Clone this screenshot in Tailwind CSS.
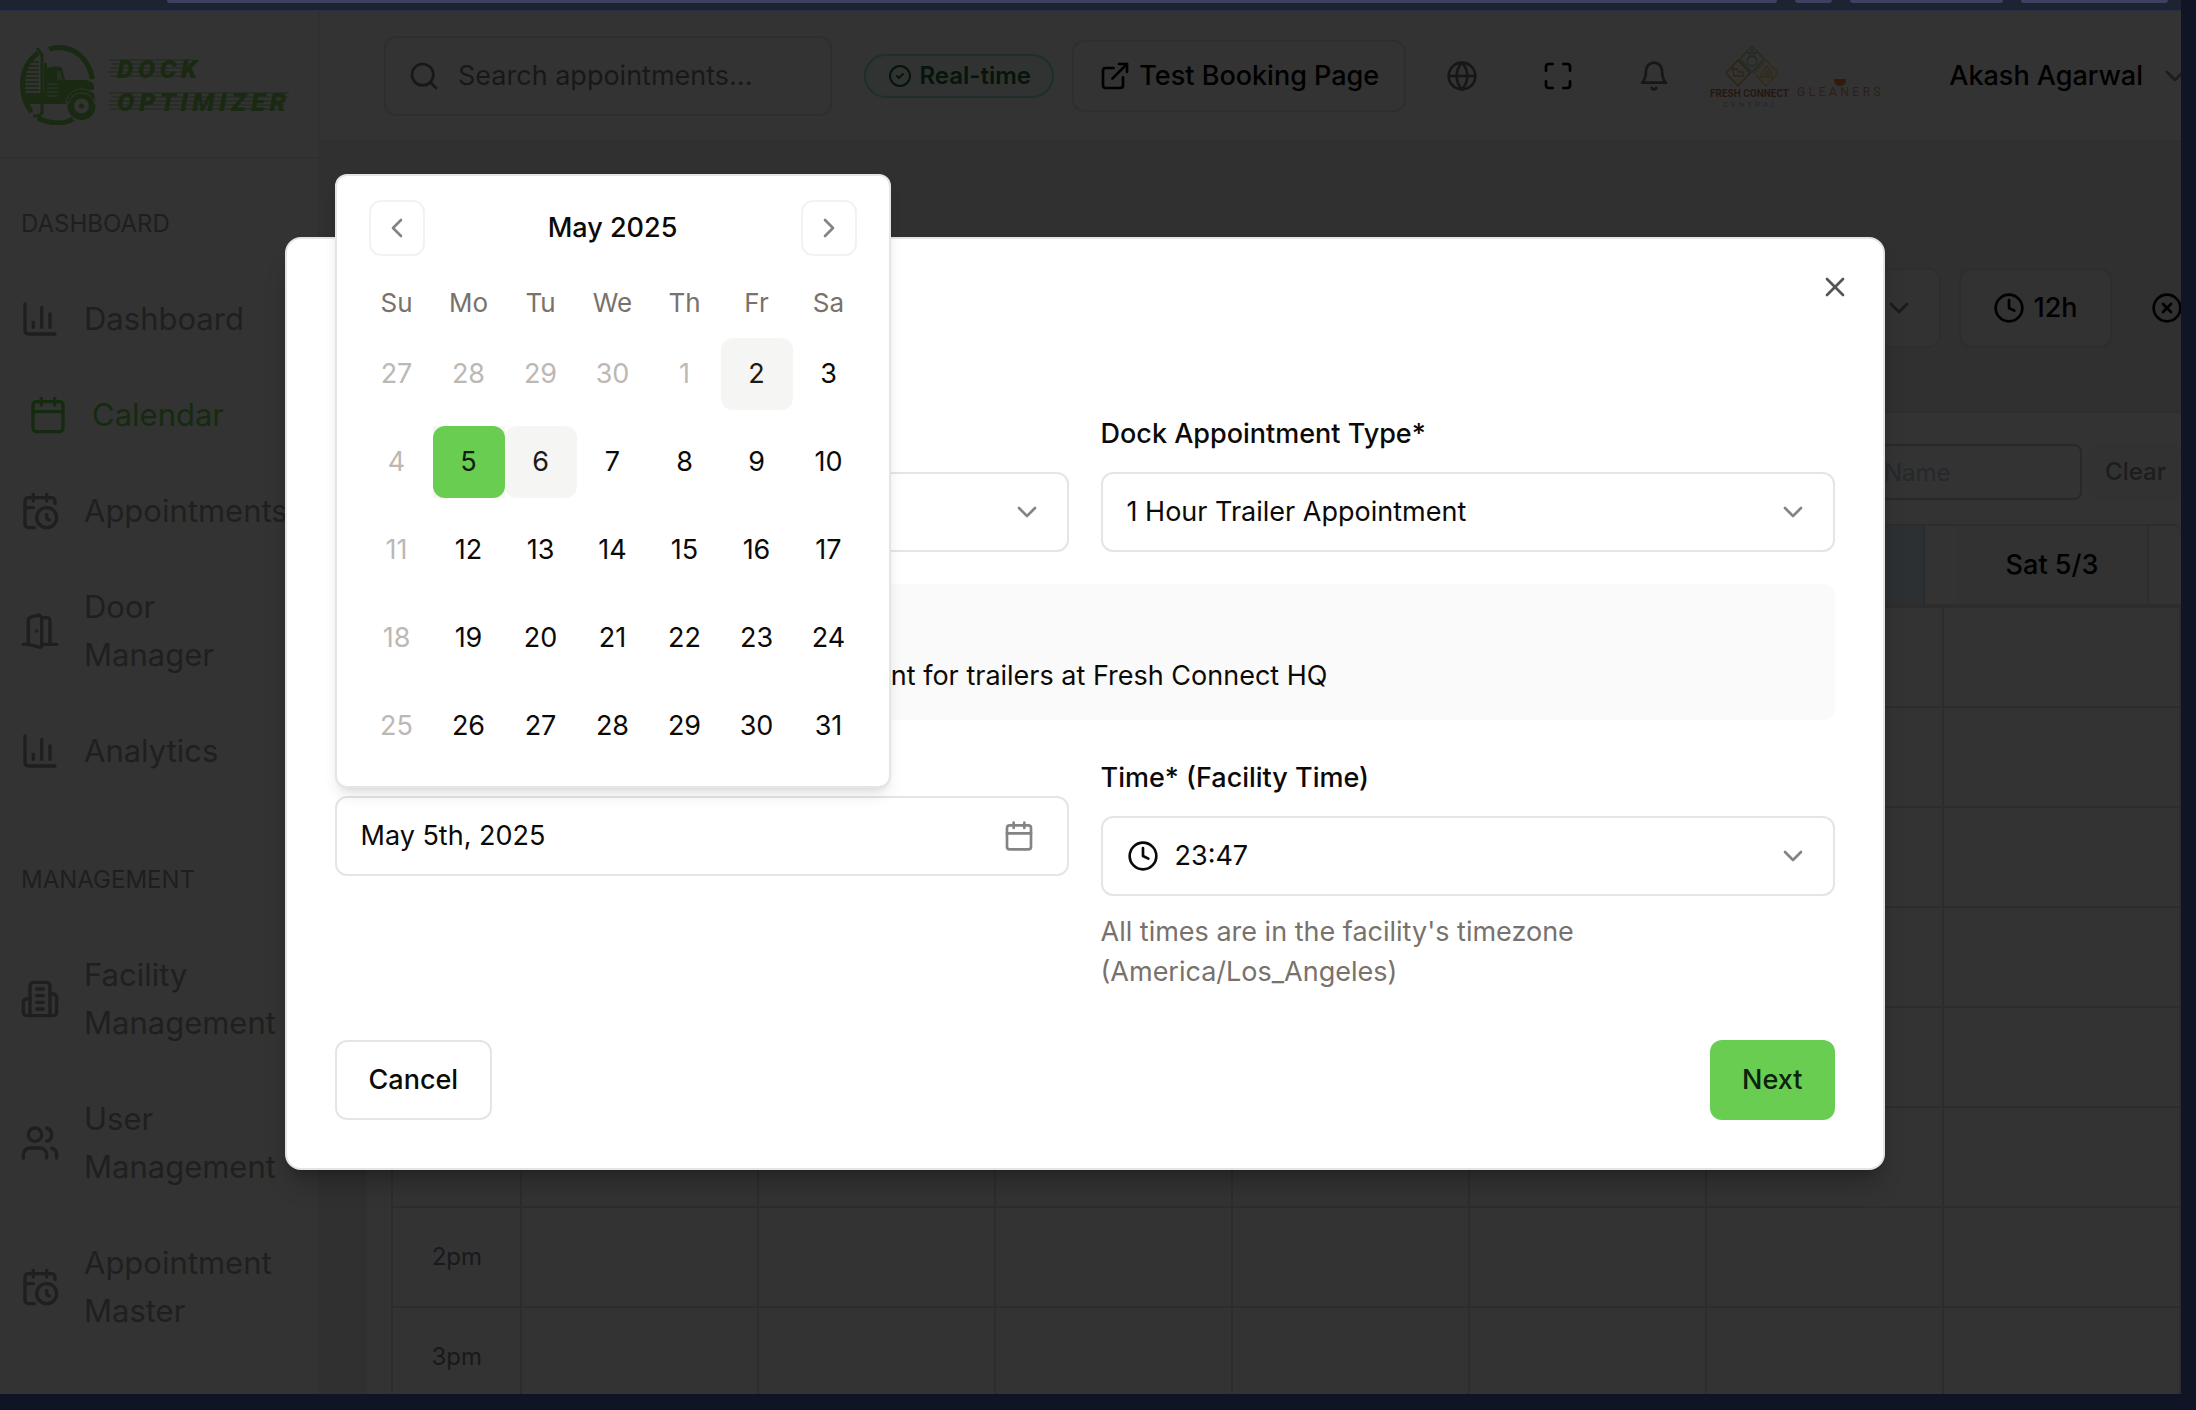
<!DOCTYPE html>
<html lang="en">
<head>
<meta charset="utf-8">
<title>Dock Optimizer</title>
<script src="https://cdn.jsdelivr.net/npm/@tailwindcss/browser@4"></script>
</head>
<body class="h-screen overflow-hidden flex flex-col bg-[#0f1524] font-['Inter',sans-serif] text-[27px] leading-10 text-black">

<svg class="hidden" aria-hidden="true">
  <defs>
    <symbol id="chart" viewBox="0 0 24 24"><path d="M3 3v16a2 2 0 0 0 2 2h16"/><path d="M18 17V9"/><path d="M13 17V5"/><path d="M8 17v-3"/></symbol>
    <symbol id="calendar" viewBox="0 0 24 24"><path d="M8 2v4"/><path d="M16 2v4"/><rect width="18" height="18" x="3" y="4" rx="2"/><path d="M3 10h18"/></symbol>
    <symbol id="calclock" viewBox="0 0 24 24"><path d="M21 7.5V6a2 2 0 0 0-2-2H5a2 2 0 0 0-2 2v14a2 2 0 0 0 2 2h3.500"/><path d="M16 2v4"/><path d="M8 2v4"/><path d="M3 10h5"/><path d="M17.500 17.500 16 16.300V14"/><circle cx="16" cy="16" r="6"/></symbol>
    <symbol id="door" viewBox="0 0 24 24"><path d="M13 4h3a2 2 0 0 1 2 2v14"/><path d="M2 20h3"/><path d="M13 20h9"/><path d="M10 12v.01"/><path d="M13 4.562v16.157a1 1 0 0 1-1.242.97L5 20V5.562a2 2 0 0 1 1.515-1.940l4-1A2 2 0 0 1 13 4.561Z"/></symbol>
    <symbol id="building" viewBox="0 0 24 24"><path d="M6 22V4a2 2 0 0 1 2-2h8a2 2 0 0 1 2 2v18Z"/><path d="M6 12H4a2 2 0 0 0-2 2v6a2 2 0 0 0 2 2h2"/><path d="M18 9h2a2 2 0 0 1 2 2v9a2 2 0 0 1-2 2h-2"/><path d="M10 6h4"/><path d="M10 10h4"/><path d="M10 14h4"/><path d="M10 18h4"/></symbol>
    <symbol id="users" viewBox="0 0 24 24"><path d="M16 21v-2a4 4 0 0 0-4-4H6a4 4 0 0 0-4 4v2"/><circle cx="9" cy="7" r="4"/><path d="M22 21v-2a4 4 0 0 0-3-3.870"/><path d="M16 3.130a4 4 0 0 1 0 7.750"/></symbol>
    <symbol id="clock" viewBox="0 0 24 24"><circle cx="12" cy="12" r="10"/><path d="M12 6v6l4 2"/></symbol>
    <symbol id="down" viewBox="0 0 24 24"><path d="m6 9 6 6 6-6"/></symbol>
    <symbol id="left" viewBox="0 0 24 24"><path d="m15 18-6-6 6-6"/></symbol>
    <symbol id="right" viewBox="0 0 24 24"><path d="m9 18 6-6-6-6"/></symbol>
  </defs>
</svg>

<!-- browser toolbar edge -->
<div class="h-3 shrink-0 mr-[15px] bg-[#1e2333] border-b-2 border-[#2a3046] flex items-start gap-[18px] pl-[167px] pr-[13px]">
  <div class="h-[3px] flex-1 rounded-b bg-[#3d4260]"></div>
  <div class="h-[3px] w-[37px] rounded-b bg-[#3d4260]"></div>
  <div class="h-[3px] w-[153px] rounded-b bg-[#3d4260]"></div>
  <div class="h-[3px] w-[147px] rounded-b bg-[#3d4260]"></div>
</div>

<div class="relative flex-1 min-h-0 mr-[15px] mb-4 overflow-hidden flex bg-[#303030]">

  <!-- sidebar -->
  <aside class="w-80 shrink-0 bg-[#333] border-r-2 border-[#303030]">
    <div class="h-[147px] border-b-2 border-[#303030] flex items-center pl-5">
      <svg class="w-[272px] h-20 shrink-0" viewBox="0 0 272 80" role="img" aria-label="Dock Optimizer">
        <g fill="none" stroke="#1a2912">
          <path stroke-width="5" d="M72.500 34C69 14 55 2.500 39 2.500c-4 0-7 .7-10 1.700M18 8C8 15 2.500 26 2.500 40c0 11 3.500 20 9 27M18 73c6 3.500 13 5 20 5 6 0 11-1.500 15-4"/>
          <path stroke-width="3" d="M17 3l5 7v58l-3 3h-6"/>
          <path stroke-width="1.500" d="M9 17h10M7 21h12M6 25h13M5 29h14M4 33h15M4 37h15M3 41h16M3 45h16"/>
        </g>
        <g fill="#1a2912">
          <path d="M24 18h3v41h-3zM27 24c2-3 12-3 15-1l3 12h18c6 0 10 2 11 6v4h-6c-10-1-17 5-19 14H5l-1-11h20V32h3z"/>
          <path fill="#333" d="M40 26l3 9h-6v-9z" opacity=".5"/>
          <circle cx="61.500" cy="61" r="14"/>
          <path d="M46 58c1-9 8-14 16-14 6 0 10 2 13 6v9c-2-7-7-11-13-11-7 0-12 4-13 10z" stroke="#333" stroke-width="1"/>
        </g>
        <circle cx="61.500" cy="61" r="7.500" fill="#333"/><circle cx="61.500" cy="61" r="2.500" fill="#1a2912"/>
        <path stroke="#333" stroke-width="1" d="M27 39h11M27 43h11M27 47h11M27 51h11"/>
        <path stroke="#1a2912" stroke-width="1.200" opacity=".8" d="M89 15h84M92 19h80M90 23h80M88 27h80M90 31h78M89 48h180M92 52h176M90 56h176M88 60h176M90 64h172"/>
        <g font-family="Roboto, sans-serif" font-weight="900" font-style="italic" font-size="26" fill="#1a2912">
          <text x="97" y="33" letter-spacing="4.500">DOCK</text>
          <text x="97" y="66" letter-spacing="4.500">OPTIMIZER</text>
        </g>
      </svg>
    </div>
    <nav class="text-[#201f1f] text-[31px] leading-12">
      <h2 class="h-28 pt-[45px] pl-[21px] text-2xl leading-10 text-[#1f1e1e]">DASHBOARD</h2>
      <a href="#" class="flex items-center gap-6 py-6 pl-5 pr-10"><svg class="size-10 shrink-0 fill-none stroke-current stroke-2 [stroke-linecap:round] [stroke-linejoin:round]"><use href="#chart"/></svg><span class="w-49">Dashboard</span></a>
      <a href="#" class="flex items-center gap-6 py-6 pl-7 pr-8 text-[#152b10]"><svg class="size-10 shrink-0 fill-none stroke-current stroke-2 [stroke-linecap:round] [stroke-linejoin:round]"><use href="#calendar"/></svg><span class="w-49">Calendar</span></a>
      <a href="#" class="flex items-center gap-6 py-6 pl-5 pr-10"><svg class="size-10 shrink-0 fill-none stroke-current stroke-2 [stroke-linecap:round] [stroke-linejoin:round]"><use href="#calclock"/></svg><span class="w-49">Appointments</span></a>
      <a href="#" class="flex items-center gap-6 py-6 pl-5 pr-10"><svg class="size-10 shrink-0 fill-none stroke-current stroke-2 [stroke-linecap:round] [stroke-linejoin:round]"><use href="#door"/></svg><span class="w-40">Door Manager</span></a>
      <a href="#" class="flex items-center gap-6 py-6 pl-5 pr-10"><svg class="size-10 shrink-0 fill-none stroke-current stroke-2 [stroke-linecap:round] [stroke-linejoin:round]"><use href="#chart"/></svg><span class="w-49">Analytics</span></a>
      <h2 class="h-32 pt-[61px] pl-[21px] text-2xl leading-10 text-[#1f1e1e]">MANAGEMENT</h2>
      <a href="#" class="flex items-center gap-6 py-6 pl-5 pr-10"><svg class="size-10 shrink-0 fill-none stroke-current stroke-2 [stroke-linecap:round] [stroke-linejoin:round]"><use href="#building"/></svg><span class="w-49">Facility Management</span></a>
      <a href="#" class="flex items-center gap-6 py-6 pl-5 pr-10"><svg class="size-10 shrink-0 fill-none stroke-current stroke-2 [stroke-linecap:round] [stroke-linejoin:round]"><use href="#users"/></svg><span class="w-49">User Management</span></a>
      <a href="#" class="flex items-center gap-6 py-6 pl-5 pr-10"><svg class="size-10 shrink-0 fill-none stroke-current stroke-2 [stroke-linecap:round] [stroke-linejoin:round]"><use href="#calclock"/></svg><span class="w-49">Appointment Master</span></a>
    </nav>
  </aside>

  <div class="flex-1 min-w-0 flex flex-col">
    <!-- top bar -->
    <header class="h-[130px] shrink-0 bg-[#333] border-b-2 border-[#2f2f2f] flex items-center pl-16 -mr-2.5">
      <label class="flex-1 min-w-0 h-20 rounded-xl border-2 border-[#2e2e2e] flex items-center gap-[18px] pl-[22px] pr-4">
        <svg class="size-8 shrink-0 fill-none stroke-[#191817] stroke-2 [stroke-linecap:round]" viewBox="0 0 24 24"><circle cx="11" cy="11" r="8"/><path d="m21 21-4.300-4.300"/></svg>
        <input type="text" aria-label="Search appointments" placeholder="Search appointments..." class="min-w-0 flex-1 bg-transparent outline-none placeholder:text-[#191817]">
      </label>
      <div class="ml-8 h-11 w-[190px] rounded-full border-2 border-[#1d3023] bg-[#303331] text-[#06150b] flex items-center justify-center gap-2 text-2xl font-semibold shrink-0">
        <svg class="size-6 fill-none stroke-current stroke-2 [stroke-linecap:round] [stroke-linejoin:round]" viewBox="0 0 24 24"><circle cx="12" cy="12" r="10"/><path d="m9 12 2 2 4-4"/></svg>
        Real-time
      </div>
      <button class="ml-[18px] h-[72px] w-[334px] shrink-0 rounded-xl border-2 border-[#2e2e2e] flex items-center justify-center gap-2 font-medium">
        <svg class="size-8 fill-none stroke-current stroke-2 [stroke-linecap:round] [stroke-linejoin:round]" viewBox="0 0 24 24"><path d="M15 3h6v6"/><path d="M10 14 21 3"/><path d="M18 13v6a2 2 0 0 1-2 2H5a2 2 0 0 1-2-2V8a2 2 0 0 1 2-2h6"/></svg>
        Test Booking Page
      </button>
      <div class="ml-5 flex gap-6 shrink-0">
        <button aria-label="Language" class="size-[72px] grid place-items-center"><svg class="size-8 fill-none stroke-[#171717] stroke-2" viewBox="0 0 24 24"><circle cx="12" cy="12" r="10"/><path d="M12 2a14.500 14.500 0 0 0 0 20 14.500 14.500 0 0 0 0-20"/><path d="M2 12h20"/></svg></button>
        <button aria-label="Full screen" class="size-[72px] grid place-items-center"><svg class="size-8 fill-none stroke-black stroke-2 [stroke-linecap:round] [stroke-linejoin:round]" viewBox="0 0 24 24"><path d="M8 3H5a2 2 0 0 0-2 2v3"/><path d="M21 8V5a2 2 0 0 0-2-2h-3"/><path d="M3 16v3a2 2 0 0 0 2 2h3"/><path d="M16 21h3a2 2 0 0 0 2-2v-3"/></svg></button>
        <button aria-label="Notifications" class="size-[72px] grid place-items-center"><svg class="size-8 fill-none stroke-[#171717] stroke-2 [stroke-linecap:round] [stroke-linejoin:round]" viewBox="0 0 24 24"><path d="M6 8a6 6 0 0 1 12 0c0 7 3 9 3 9H3s3-2 3-9"/><path d="M10.300 21a1.940 1.940 0 0 0 3.400 0"/></svg></button>
      </div>
      <svg class="ml-5 w-[180px] h-16 shrink-0" viewBox="0 0 180 64" role="img" aria-label="Fresh Connect Central, Gleaners">
        <g fill="none" stroke-width="1.300">
          <g stroke="#222c22"><path d="M42 2l12 13-12 13-12-13z"/><circle cx="42" cy="17" r="5"/><path d="M42 6l1 3h3l-2 2 1 3-3-2-3 2 1-3-2-2h3z"/></g>
          <g stroke="#2f2212"><path d="M28 16l12 13-12 13-12-13z"/><path d="M22 22l2 10h9v-4h-4l-2-3h-3z"/></g>
          <g stroke="#322c14"><path d="M56 16l12 13-12 13-12-13z"/><path d="M50 33l4-8 2-3 4 3 2 8zM54 33l2-7M58 33v-7"/></g>
        </g>
        <text x="0" y="53" font-family="Roboto, sans-serif" font-size="10" font-weight="700" fill="#26180f">FRESH CONNECT</text>
        <text x="13" y="63" font-family="Roboto, sans-serif" font-size="8" letter-spacing="3" fill="#262626">CENTRAL</text>
        <text x="87" y="52" font-family="Roboto, sans-serif" font-size="12" letter-spacing="3.500" fill="#2d1f16">GLEANERS</text>
        <path d="M124 35h12c0 5-3 7-6 7s-6-2-6-7z" fill="#331b0c"/>
      </svg>
      <span class="ml-[59px] font-medium whitespace-nowrap">Akash Agarwal</span>
      <svg class="ml-4 size-8 shrink-0 fill-none stroke-[#1d1d1d] stroke-2 [stroke-linecap:round] [stroke-linejoin:round]"><use href="#down"/></svg>
    </header>

    <main class="flex-1 min-h-0 pl-[47px] pt-[126px] flex flex-col">
      <div class="flex items-center justify-end gap-[18px] h-20 shrink-0">
        <button aria-label="View" class="w-40 h-20 rounded-xl border-2 border-[#2e2e2e] bg-[#323232] flex items-center justify-end pr-6"><svg class="size-8 fill-none stroke-[#1a1a1a] stroke-2 [stroke-linecap:round] [stroke-linejoin:round]"><use href="#down"/></svg></button>
        <button class="w-[153px] h-20 rounded-xl border-2 border-[#2d2d2d] bg-[#323232] flex items-center justify-center gap-2 font-medium"><svg class="size-8 fill-none stroke-current stroke-2 [stroke-linecap:round] [stroke-linejoin:round]"><use href="#clock"/></svg>12h</button>
        <button aria-label="Clear filters" class="h-20 w-[53px] flex items-center justify-end -mr-0.5"><svg class="size-8 fill-none stroke-current stroke-2 [stroke-linecap:round]" viewBox="0 0 24 24"><circle cx="12" cy="12" r="10"/><path d="m15 9-6 6"/><path d="m9 9 6 6"/></svg></button>
      </div>

      <section class="mt-[63px] flex-1 min-h-0 overflow-hidden bg-[#333] border-t-2 border-[#2e2e2e] pl-6 pt-[31px]">
        <div class="flex justify-end gap-2 h-14 text-2xl">
          <input type="text" aria-label="Name" placeholder="Name" class="w-[240px] h-14 rounded-lg border-2 border-[#292929] bg-[#333] pl-10 placeholder:text-[#25282b]">
          <button class="w-[91px] rounded-lg bg-[#323232] font-medium text-[#1d1d1d] flex items-center justify-center">Clear</button>
        </div>
        <div class="mt-6 h-[82px] border-y-2 border-l-2 border-[#2d2d2d] rounded-t-lg flex justify-end">
          <div class="w-[200px] bg-[#2d3033] border-r-2 border-[#292b2d]"></div>
          <div class="w-8"></div>
          <div class="w-[192px] bg-[#323232] border-r-2 border-[#2d2d2d] grid place-items-center font-medium">Sat 5/3</div>
          <div class="w-8"></div>
        </div>
        <table class="w-full table-fixed border-collapse text-2xl text-[#17191c]">
          <colgroup><col class="w-[129px]"><col><col><col><col><col><col><col></colgroup>
          <tbody id="hours"></tbody>
        </table>
      </section>
    </main>
  </div>

  <!-- appointment dialog -->
  <div class="absolute inset-y-0 left-0 right-3 flex items-center justify-center">
    <div role="dialog" aria-modal="true" class="relative w-full max-w-[1600px] bg-white border-2 border-[#e4e4e4] rounded-2xl shadow-xl shadow-black/20 px-12 pt-12 pb-12 text-[#0c0a09]">
      <button aria-label="Close" class="absolute right-8 top-8 size-8 grid place-items-center"><svg class="size-8 fill-none stroke-[#555] stroke-2 [stroke-linecap:round]" viewBox="0 0 24 24"><path d="M18 6 6 18"/><path d="m6 6 12 12"/></svg></button>

      <div class="grid grid-cols-2 gap-x-8 pt-[127px]">
        <div class="pt-[58px]">
          <div class="relative">
            <select aria-label="Facility" class="appearance-none w-full h-20 rounded-xl border-2 border-[#e5e5e5] bg-white px-6"><option></option></select>
            <svg class="absolute right-[26px] top-6 size-8 pointer-events-none fill-none stroke-[#858484] stroke-2 [stroke-linecap:round] [stroke-linejoin:round]"><use href="#down"/></svg>
          </div>
        </div>
        <div>
          <label for="type" class="block h-[58px] font-medium">Dock Appointment Type*</label>
          <div class="relative">
            <select id="type" class="appearance-none w-full h-20 rounded-xl border-2 border-[#e5e5e5] bg-white px-6"><option>1 Hour Trailer Appointment</option></select>
            <svg class="absolute right-[26px] top-6 size-8 pointer-events-none fill-none stroke-[#858484] stroke-2 [stroke-linecap:round] [stroke-linejoin:round]"><use href="#down"/></svg>
          </div>
        </div>
      </div>

      <div class="mt-8 h-[136px] rounded-xl bg-[#fafafa] flex items-end justify-end pb-6 pr-[507px]">
        <p class="whitespace-nowrap">appointment for trailers at Fresh Connect HQ</p>
      </div>

      <div class="mt-8 grid grid-cols-2 gap-x-8">
        <div class="pt-11">
          <div class="relative">
            <button class="w-full h-20 rounded-xl border-2 border-[#e5e5e5] bg-white pl-6 pr-8 flex items-center justify-between">May 5th, 2025
              <svg class="size-8 fill-none stroke-[#858484] stroke-2 [stroke-linecap:round] [stroke-linejoin:round]"><use href="#calendar"/></svg>
            </button>

            <!-- date picker -->
            <div class="absolute bottom-full left-0 mb-2 bg-white border-2 border-[#e5e5e5] rounded-xl p-6 shadow-lg">
              <div class="flex items-center justify-between px-2">
                <button aria-label="Previous month" class="size-14 rounded-xl border-2 border-[#f2f2f2] grid place-items-center"><svg class="size-8 fill-none stroke-[#858484] stroke-2 [stroke-linecap:round] [stroke-linejoin:round]"><use href="#left"/></svg></button>
                <span class="font-medium">May 2025</span>
                <button aria-label="Next month" class="size-14 rounded-xl border-2 border-[#f2f2f2] grid place-items-center"><svg class="size-8 fill-none stroke-[#858484] stroke-2 [stroke-linecap:round] [stroke-linejoin:round]"><use href="#right"/></svg></button>
              </div>
              <table class="mt-7 table-fixed w-[504px] border-collapse text-center">
                <thead class="text-[26px] leading-[38px] text-[#78716c]"><tr>
                  <th class="font-normal p-0">Su</th><th class="font-normal p-0">Mo</th><th class="font-normal p-0">Tu</th><th class="font-normal p-0">We</th><th class="font-normal p-0">Th</th><th class="font-normal p-0">Fr</th><th class="font-normal p-0">Sa</th>
                </tr></thead>
                <tbody id="days"></tbody>
              </table>
            </div>
          </div>
        </div>
        <div>
          <label for="time" class="block h-16 pt-1.5 font-medium">Time* (Facility Time)</label>
          <div class="relative">
            <select id="time" class="appearance-none w-full h-20 rounded-xl border-2 border-[#e5e5e5] bg-white pl-[72px] pr-6"><option>23:47</option></select>
            <svg class="absolute left-[26px] top-6 size-8 pointer-events-none fill-none stroke-current stroke-2 [stroke-linecap:round] [stroke-linejoin:round]"><use href="#clock"/></svg>
            <svg class="absolute right-[26px] top-6 size-8 pointer-events-none fill-none stroke-[#858484] stroke-2 [stroke-linecap:round] [stroke-linejoin:round]"><use href="#down"/></svg>
          </div>
          <p class="mt-4 text-[#78716c]">All times are in the facility's timezone<br>(America/Los_Angeles)</p>
        </div>
      </div>

      <div class="mt-12 flex justify-between">
        <button class="h-20 px-8 rounded-xl border-2 border-[#e5e5e5] bg-white font-medium">Cancel</button>
        <button class="h-20 px-8 rounded-xl bg-[#69cd51] text-[#0b220c] font-medium">Next</button>
      </div>
    </div>
  </div>
</div>

<script>
  const weeks = [[27,28,29,30,1,2,3],[4,5,6,7,8,9,10],[11,12,13,14,15,16,17],[18,19,20,21,22,23,24],[25,26,27,28,29,30,31]];
  document.getElementById('days').innerHTML = weeks.map((w, r) =>
    '<tr class="align-bottom">' + w.map((d, c) => {
      const off = c === 0 || (r === 0 && c < 5);
      const selected = r === 1 && c === 1;
      const shaded = (r === 0 && c === 5) || (r === 1 && c === 2);
      const look = selected ? 'bg-[#69cd51] text-[#0b220c]' : shaded ? 'bg-[#f5f5f4] text-[#1c1917]' : off ? 'text-[#bcb8b6]' : '';
      return '<td class="p-0 pt-4"><div class="' + (selected ? 'bg-[#f5f5f4]' : '') + '"><button class="block size-[72px] rounded-xl ' + look + '"' + (off ? ' disabled' : '') + '>' + d + '</button></div></td>';
    }).join('') + '</tr>').join('');

  const hours = ['', '', '', '', '', '', '2pm', '3pm'];
  document.getElementById('hours').innerHTML = hours.map(h =>
    '<tr class="h-[100px]"><th class="font-normal border-2 border-[#2d2d2d] text-right p-0 pr-[38px]">' + h + '</th>' +
    '<td class="border-2 border-[#2d2d2d]"></td>'.repeat(7) + '</tr>').join('');
</script>
</body>
</html>
